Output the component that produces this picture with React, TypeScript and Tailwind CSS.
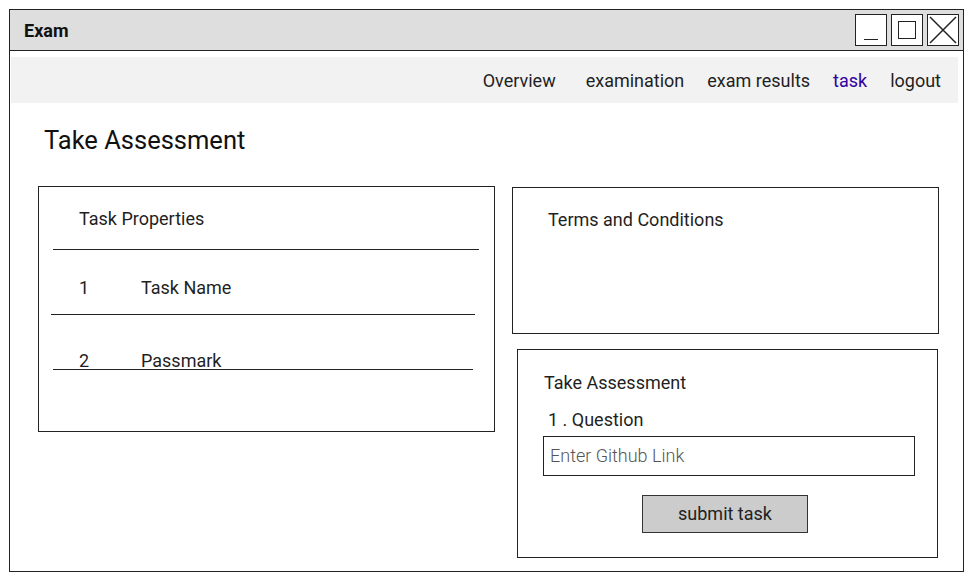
import React from "react";

const navLinks = [
  { label: "examination", active: false },
  { label: "exam results", active: false },
  { label: "task", active: true },
  { label: "logout", active: false },
];

function WindowButtons() {
  return (
    <div className="flex gap-[4px] pr-[4px]">
      <div className="flex h-[32px] w-[32px] items-end justify-center border-[1.5px] border-[#222] bg-white pb-[5px]">
        <div className="h-[1.5px] w-[14px] bg-[#222]" />
      </div>
      <div className="flex h-[32px] w-[32px] items-center justify-center border-[1.5px] border-[#222] bg-white">
        <div className="h-[18px] w-[18px] border-[1.5px] border-[#222]" />
      </div>
      <div className="flex h-[32px] w-[32px] items-center justify-center border-[1.5px] border-[#222] bg-white">
        <svg width="28" height="28" viewBox="0 0 28 28" fill="none" stroke="#222" strokeWidth="1.5">
          <path d="M1 1 L27 27 M27 1 L1 27" />
        </svg>
      </div>
    </div>
  );
}

export default function App() {
  return (
    <div className="h-[578px] w-[972px] bg-white font-['Roboto',sans-serif] text-[#1f1f1f]">
      <div className="ml-[9px] pt-[9px]">
        <div className="flex h-[563px] w-[955px] flex-col border border-[#222]">
          {/* Title bar */}
          <div className="flex h-[41px] items-center justify-between border-b border-[#222] bg-[#dedede] pl-[14px]">
            <span className="text-[18px] font-bold text-[#111]">Exam</span>
            <WindowButtons />
          </div>

          {/* Nav */}
          <div className="ml-[1px] mt-[6px] flex h-[46px] w-[947px] items-center justify-end bg-[#f2f2f2] pr-[17px] text-[18px]">
            <span className="mr-[30px]">Overview</span>
            <div className="flex gap-[23px]">
              {navLinks.map((l) => (
                <span key={l.label} className={l.active ? "text-[#3300a0]" : ""}>
                  {l.label}
                </span>
              ))}
            </div>
          </div>

          {/* Page */}
          <div className="pl-[28px]">
            <h1 className="mt-[21px] pl-[6px] text-[25.5px] leading-[32px] text-[#111]">Take Assessment</h1>

            <div className="mt-[30px] flex gap-[17px]">
              {/* Task properties */}
              <div className="h-[246px] w-[457px] border border-[#222] text-[18px] leading-[24px]">
                <div className="pl-[40px] pt-[20px]">Task Properties</div>
                <div className="ml-[14px] mt-[18px] w-[426px] border-t-[1.5px] border-[#222]" />
                <div className="mt-[26px] flex pl-[40px]">
                  <span className="w-[62px]">1</span>
                  <span>Task Name</span>
                </div>
                <div className="ml-[12px] mt-[14px] w-[424px] border-t-[1.5px] border-[#222]" />
                <div className="mt-[34px] flex pl-[40px]">
                  <span className="w-[62px]">2</span>
                  <span>Passmark</span>
                </div>
                <div className="ml-[14px] mt-[-4px] w-[420px] border-t-[1.5px] border-[#222]" />
              </div>

              {/* Right column */}
              <div className="flex flex-col gap-[15px] pt-[1px]">
                <div className="h-[147px] w-[427px] border border-[#222] pl-[35px] pt-[20px] text-[18px] leading-[24px]">
                  Terms and Conditions
                </div>

                <div className="ml-[5px] flex h-[209px] w-[421px] flex-col border border-[#222] text-[18px] leading-[24px]">
                  <div className="pl-[26px] pt-[21px]">Take Assessment</div>
                  <div className="mt-[13px] pl-[30px]">1 . Question</div>
                  <div className="ml-[25px] mt-[4px] flex h-[40px] w-[372px] items-center border-[1.5px] border-[#222] pl-[6px] font-light text-[#555]">
                    Enter Github Link
                  </div>
                  <div className="ml-[124px] mt-[19px] flex h-[38px] w-[166px] items-center justify-center border-[1.5px] border-[#333] bg-[#cccccc] text-[#222]">
                    submit task
                  </div>
                </div>
              </div>
            </div>
          </div>
        </div>
      </div>
    </div>
  );
}
